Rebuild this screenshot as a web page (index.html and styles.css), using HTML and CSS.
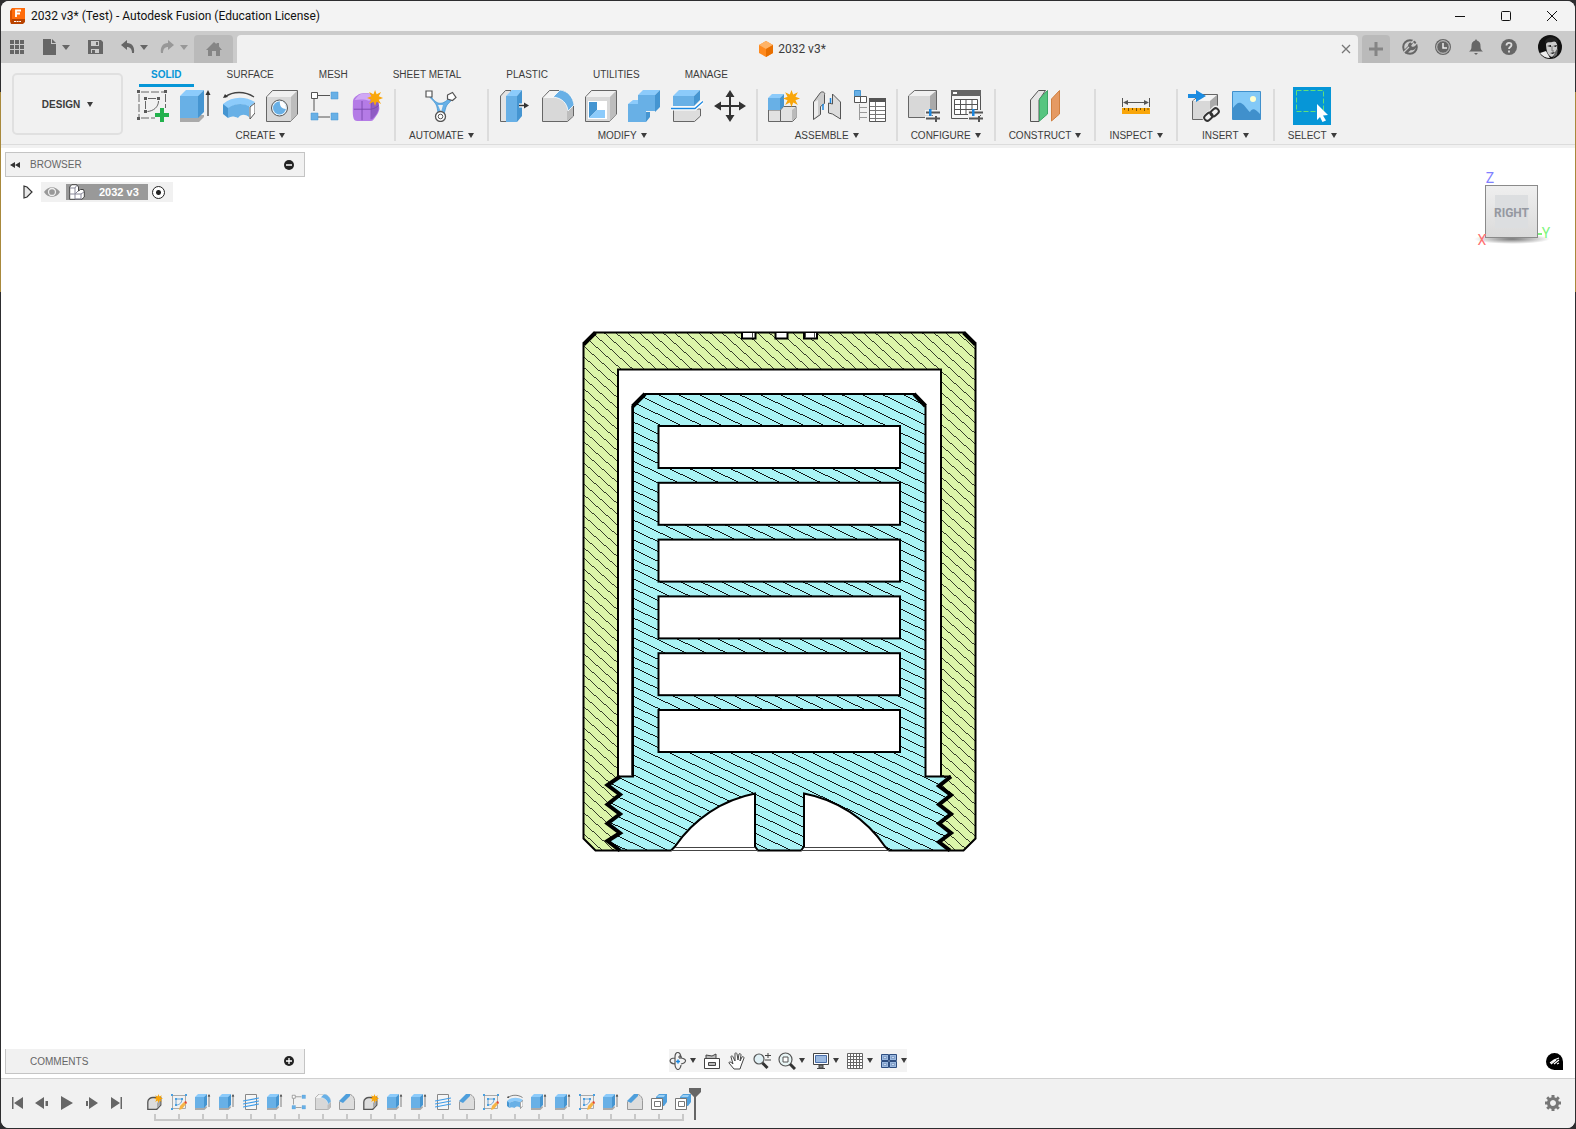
FILE: index.html
```html
<!DOCTYPE html>
<html lang="en">
<head>
    <meta charset="UTF-8">
    <meta name="viewport" content="width=device-width, initial-scale=1.0">
    <title>2032 v3* (Test) - Autodesk Fusion (Education License)</title>
    <link rel="stylesheet" href="styles.css">
</head>
<body>
    <!-- Icon definitions -->
    <svg class="defs" aria-hidden="true">
        <symbol id="i-sketch" viewBox="0 0 32 32">
            <path d="M2 4v24M4 28h14M4 2h24M28.500 4v14" fill="none" stroke="#666" stroke-dasharray="8 2"/>
            <path d="M0 0h3v3H0zM27 0h3v3h-3zM0 27h3v3H0zM7 7h3v3H7zM20 7h3v3h-3zM7 20h3v3H7z" fill="#5a5a5a"/>
            <path d="M11 8.500h8M8.500 11v8M21.500 11c0 6-5 10-11 10.500" fill="none" stroke="#666"/>
            <path d="M23 18h4v5h5v4h-5v5h-4v-5h-5v-4h5z" fill="#22b14c"/>
        </symbol>
        <symbol id="i-extrude" viewBox="0 0 32 32">
            <path d="M0 28l5-3h19v2l-5 5H0z" fill="#aaa"/>
            <path d="M0 6h18v22H0z" fill="#68b0e6"/>
            <path d="M0 6l6-6h18l-6 6z" fill="#8ccbfb"/>
            <path d="M18 6l6-6v22l-6 6z" fill="#4595d1"/>
            <path d="M28 26V4" stroke="#333" stroke-width="1.200"/><path d="M28 0l2.500 5h-5z" fill="#333"/>
        </symbol>
        <symbol id="i-revolve" viewBox="0 0 32 32">
            <path d="M2 7C10 1 22 1 31 7" fill="none" stroke="#444" stroke-width="1.300"/><path d="M0 8l2-4 3 3z" fill="#333"/>
            <path d="M0 14C9 6 22 6 32 12l-5 5c-6-4-15-4-23 2z" fill="#8ccbfb"/>
            <path d="M0 14l5 4v10l-5-4z" fill="#4595d1"/>
            <path d="M5 18c7-5 15-5 21-2v11c-4-3-8-3-11 1-4-2-7-2-10 0z" fill="#68b0e6"/>
            <path d="M27 17l5-4v10l-5 6z" fill="#fff" stroke="#555"/>
        </symbol>
        <symbol id="i-hole" viewBox="0 0 32 32">
            <path d="M.5 7l6-6.500h25V24l-7 7.500H.5z" fill="#d8d8d8" stroke="#666"/>
            <path d="M1 7l6-6h24l-6 6z" fill="#f0f0f0"/><path d="M25 7l6-6v23l-6 7z" fill="#bdbdbd"/>
            <circle cx="13.500" cy="18" r="8" fill="#e8f3fb" stroke="#555"/>
            <circle cx="13.500" cy="18" r="6.500" fill="#68b0e6"/>
            <path d="M14 11a7 7 0 0 1 6 8c-4 0-7-3-6-8z" fill="#fff"/>
        </symbol>
        <symbol id="i-pattern" viewBox="0 0 32 32">
            <path d="M9 5.500h12M5 9v12M9 27h12" stroke="#555"/>
            <path d="M2.500 2.500h6v6h-6z" fill="#fff" stroke="#555"/>
            <path d="M22 2h7v7h-7zM2 23h7v7H2zM22 23h7v7h-7z" fill="#68b0e6" stroke="#4595d1" stroke-width=".5"/>
        </symbol>
        <symbol id="i-star" viewBox="0 0 16 16">
            <path d="M8 0l1.600 4.300L14 2l-2.300 4.300L16 8l-4.300 1.700L14 14l-4.400-2.300L8 16l-1.600-4.300L2 14l2.300-4.300L0 8l4.300-1.700L2 2l4.400 2.300z" fill="#f9a60a"/>
        </symbol>
        <symbol id="i-form" viewBox="0 0 32 32">
            <path d="M1 12c0-5 2-6 6-9 2-2 13-2 16 0 4 3 7 10 7 15 0 4-4 10-7 13-2 2-17 2-20 0-3-3-2-12-2-19z" fill="#b47be6"/>
            <path d="M3 9c3-4 5-7 9-7 5 0 9 0 11 2l-4 6c-5-2-11-2-16-1z" fill="#d0a8f5"/>
            <path d="M21 12c3-4 6-3 8-1 1 8 0 12-7 19z" fill="#8f5cc4"/>
            <path d="M11 10v21M2 19h19c4-1 6-2 8-4M21 11v19" fill="none" stroke="#7a47ad"/>
        </symbol>
        <symbol id="i-formstar" viewBox="0 0 34 34">
            <use href="#i-form" x="0" y="2" width="31" height="31"/><use href="#i-star" x="16" y="0" width="17" height="17"/>
        </symbol>
        <symbol id="i-automate" viewBox="0 0 32 32">
            <path d="M5 5c3 5 6 7 8 8 4 1 8-1 11-5l3 2c-2 2-5 4-6 7-1 4-2 6-2 9h-6c0-5-1-11-3-13-2-3-4-4-6-7z" fill="#68b0e6" stroke="#3d8fce" stroke-width=".7"/>
            <path d="M13 15h5l-2 7z" fill="#f1f1f1"/>
            <path d="M1 1h6v6H1zM22.500 5l5-2.500 3.500 5-3.500 3-5-1.500z" fill="#fff" stroke="#555" stroke-width="1.200"/>
            <circle cx="15.500" cy="26.500" r="5" fill="#fff" stroke="#555" stroke-width="1.300"/>
            <circle cx="15.500" cy="26.500" r="2.300" fill="#fff" stroke="#555"/>
        </symbol>
        <symbol id="i-press" viewBox="0 0 32 32">
            <path d="M1.500 6l5-5.500H12v31H1.500z" fill="#e4e4e4" stroke="#666"/>
            <path d="M7 6h11v26H7z" fill="#68b0e6"/><path d="M7 6l6-6h10l-5 6z" fill="#8ccbfb"/><path d="M18 6l5-6v26l-5 6z" fill="#4595d1"/>
            <path d="M20 15.500h6" stroke="#fff" stroke-width="4"/><path d="M20 15.500h7" stroke="#333" stroke-width="1.500"/><path d="M25 12.500l5 3-5 3z" fill="#333"/>
        </symbol>
        <symbol id="i-fillet" viewBox="0 0 32 32">
            <path d="M.5 8l7-7.500H19C26 2 31 8 31.500 16v10l-6 5.500H.5z" fill="#d8d8d8" stroke="#666"/>
            <path d="M1 8l7-7h9l-6 7z" fill="#f4f4f4"/><path d="M25 20l6-5v11l-6 5z" fill="#bdbdbd"/>
            <path d="M11 7l7-7c8 1 13 7 14 15l-6 6c-1-8-6-13-15-14z" fill="#68b0e6" stroke="#fff" stroke-width=".8"/>
        </symbol>
        <symbol id="i-shell" viewBox="0 0 32 32">
            <path d="M.5 7l6-6.500h25V24l-7 7.500H.5z" fill="#d8d8d8" stroke="#666"/>
            <path d="M1 7l6-6h24l-6 6z" fill="#f0f0f0"/><path d="M25 7l6-6v23l-6 7z" fill="#bdbdbd"/>
            <path d="M3 11h19v18H3z" fill="#fff"/>
            <path d="M4 12h8v8l-8 8z" fill="#4595d1"/><path d="M12 20h8v8H4z" fill="#8ccbfb"/>
        </symbol>
        <symbol id="i-combine" viewBox="0 0 32 32">
            <path d="M10 5h17v16H10z" fill="#68b0e6"/><path d="M0 14h18v18H0z" fill="#68b0e6"/>
            <path d="M10 5l5-5h17l-5 5zM0 14l5-4h5v4z" fill="#8ccbfb"/>
            <path d="M27 5l5-5v17l-5 5zM18 22h4v5l-4 5z" fill="#4595d1"/>
        </symbol>
        <symbol id="i-split" viewBox="0 0 32 32">
            <path d="M2.500 19h27v7l-6 5.500h-21z" fill="#ddd" stroke="#666"/>
            <path d="M2 6h21v10H2z" fill="#68b0e6"/><path d="M2 6l6-6h21l-6 6z" fill="#8ccbfb"/><path d="M23 6l6-6v10l-6 6z" fill="#4595d1"/>
            <path d="M0 18.500h24l8-7" fill="none" stroke="#fff" stroke-width="4"/><path d="M0 18.500h24l8-7" fill="none" stroke="#1b87e0" stroke-width="1.300"/>
        </symbol>
        <symbol id="i-move" viewBox="0 0 32 32">
            <path d="M16 5v22M5 16h22" stroke="#333" stroke-width="2"/>
            <path d="M16 0l4.500 7h-9zM16 32l4.500-7h-9zM0 16l7-4.500v9zM32 16l-7-4.500v9z" fill="#333"/>
        </symbol>
        <symbol id="i-newcomp" viewBox="0 0 32 32">
            <path d="M.5 20h12v11.500H.5zM12.500 20l3-3.500H28V28l-3.500 3.500h-12z" fill="#e2e2e2" stroke="#666"/>
            <path d="M24 20l4-3v11l-4 3z" fill="#bbb"/>
            <path d="M0 8h12v12H0z" fill="#68b0e6"/><path d="M0 8l4-4h12l-4 4z" fill="#8ccbfb"/><path d="M12 8l4-4v12l-4 4z" fill="#4595d1"/>
            <use href="#i-star" x="15" y="0" width="17" height="17"/>
        </symbol>
        <symbol id="i-joint" viewBox="0 0 32 32">
            <path d="M2.500 12l7-9.500c2-1.500 5 0 4 2v9l-4 3v8l-7 5z" fill="#ccc" stroke="#555"/>
            <path d="M3 12l4-2v15l-4 3z" fill="#eee"/>
            <path d="M29.500 29V12l-8-8v10l-4-1v10l4 1z" fill="#ddd" stroke="#555"/>
            <path d="M12 14v6M19.500 8v5" stroke="#1b87e0" stroke-width="1.500"/>
        </symbol>
        <symbol id="i-table" viewBox="0 0 32 32">
            <path d="M.5.500h6v6h-6z" fill="#68b0e6" stroke="#4595d1"/><path d="M.5 6.500h6v6h-6zM6.500 6.500h6v6h-6z" fill="#fff" stroke="#555"/>
            <path d="M5.500 14v16M6 17.500h7M6 22.500h7M6 27.500h7" stroke="#999"/>
            <path d="M15.500 8.500h16v23h-16z" fill="#fff" stroke="#555"/><path d="M15 8h17v4H15z" fill="#555"/>
            <path d="M16 16.500h15M16 20.500h15M16 24.500h15M16 28.500h15M21.500 12v19" stroke="#777"/>
        </symbol>
        <symbol id="i-sliders" viewBox="0 0 16 14">
            <path d="M0 3.500h14M0 9.500h14" stroke="#f1f1f1" stroke-width="5"/>
            <path d="M1 3.500h14M1 9.500h14" stroke="#555" stroke-width="2"/>
            <path d="M4 0h2.500v7H4z" fill="#1b87e0"/><path d="M10 7h2v6h-2z" fill="#555"/>
        </symbol>
        <symbol id="i-config" viewBox="0 0 32 32">
            <path d="M.5 6l6-5.500h22V21l-6 6.500H.5z" fill="#d8d8d8" stroke="#666"/><path d="M1 6l6-5h21l-6 5z" fill="#f0f0f0"/><path d="M22 6l6-5v20l-6 6z" fill="#aaa"/>
            <use href="#i-sliders" x="17" y="19" width="16" height="14"/>
        </symbol>
        <symbol id="i-configtable" viewBox="0 0 32 32">
            <path d="M.5.500h29v28H.5z" fill="#f6f6f6" stroke="#555"/><path d="M0 0h30v6H0z" fill="#666"/><path d="M2 2h4v2H2z" fill="#fff"/>
            <path d="M3.500 9.500h23v15h-23zM3.500 14.500h23M3.500 19.500h23M9.500 9.500v15M15 9.500v15M21 9.500v15" fill="#fff" stroke="#555"/>
            <use href="#i-sliders" x="17" y="19" width="16" height="14"/>
        </symbol>
        <symbol id="i-plane" viewBox="0 0 32 32">
            <path d="M1.500 10l8-9.500h7L10 10v21.500H1.500z" fill="#e6e6e6" stroke="#555"/>
            <path d="M10.500 9l8-8.500V24l-8 7z" fill="#56c580" stroke="#3da566"/>
            <path d="M22.500 9l8-8.500V24l-8 7z" fill="#e59a63" stroke="#d08040"/>
        </symbol>
        <symbol id="i-measure" viewBox="0 0 32 32">
            <path d="M2.500 8v9M29.500 8v9M5 12.500h22" stroke="#555"/><path d="M3 12.500l5-2.500v5zM29 12.500l-5-2.500v5z" fill="#555"/>
            <path d="M2 18h28v6H2z" fill="#f9a60a"/><path d="M4.500 18v2M8.500 18v3M12.500 18v2M16.500 18v3M20.500 18v2M24.500 18v3M28 18v2" stroke="#7a5200"/>
        </symbol>
        <symbol id="i-insert" viewBox="0 0 32 32">
            <path d="M4.500 11l8-6.500h17V22l-8 7.500h-17z" fill="#d8d8d8" stroke="#666"/><path d="M5 11l8-6h16l-7 6z" fill="#f4f4f4"/><path d="M22 11l7-6v17l-7 7z" fill="#aaa"/>
            <path d="M0 4h8V0l10 6-10 6V8H0z" fill="#1b8be0"/>
            <path d="M19 28l3-3M25 23l3-3" stroke="#f1f1f1" stroke-width="9" stroke-linecap="round"/>
            <g fill="none" stroke="#333" stroke-width="2"><rect x="16" y="24" width="9" height="6" rx="3" transform="rotate(-42 20 27)"/><rect x="22" y="19" width="9" height="6" rx="3" transform="rotate(-42 27 22)"/></g>
        </symbol>
        <symbol id="i-image" viewBox="0 0 32 32">
            <path d="M1.500 1.500h28v28h-28z" fill="#83c9f7" stroke="#4090cc"/><path d="M2 18c3-4 5-6 8-5 4 2 7 8 9 9 2-4 5-4 10 2v6H2z" fill="#4090cc"/><circle cx="22" cy="9" r="3" fill="#ffffd0"/>
        </symbol>
        <symbol id="i-select" viewBox="0 0 38 38">
            <path d="M3.500 3.500h27v21h-27z" fill="none" stroke="#5fe07a" stroke-dasharray="5 2"/>
            <path d="M24 17l11 11-5 .5 3 5-3.500 1.500-2.500-5-3 3z" fill="#fff"/>
        </symbol>
        <!-- Timeline only -->
        <symbol id="t-comp" viewBox="0 0 16 16">
            <path d="M.8 8c0-3 3-4.500 5-4.500h8V11l-4 4.300h-9z" fill="#ddd" stroke="#555" stroke-width="1.300"/><path d="M10 9l3.300-3v5L10 14.600z" fill="#aaa"/><use href="#i-star" x="7" y="0" width="9" height="9"/>
        </symbol>
        <symbol id="t-sketch" viewBox="0 0 16 16">
            <path d="M1.500 1.500h13v13h-13z" fill="none" stroke="#aaa"/><path d="M5 5h6c0 3-2 6-6 6z" fill="none" stroke="#68a0d0"/>
            <path d="M0 0h2v2H0zM14 0h2v2h-2zM0 14h2v2H0zM4 4h2v2H4zM10 4h2v2h-2zM4 10h2v2H4z" fill="#4ba0e0"/><path d="M9 12l4-4 2 2-4 5-3 1z" fill="#f5b445"/><path d="M13 8l2-1 1 2-1 1z" fill="#e5442c"/>
        </symbol>
        <symbol id="t-coil" viewBox="0 0 16 16">
            <path d="M2.500.500h11v15h-11z" fill="#f6f6f6" stroke="#888"/><path d="M0 7l16-3M0 10l16-3M0 13l16-3" stroke="#3d9be8" stroke-width="1.200"/>
        </symbol>
        <symbol id="t-chamfer" viewBox="0 0 16 16">
            <path d="M.5 8l7-7.500h4c2 1 4 3 4 6v9H.5z" fill="#ddd" stroke="#999"/><path d="M0 7l7-7h4v2l-7 7z" fill="#4f9fdc"/>
        </symbol>
        <symbol id="t-combine" viewBox="0 0 16 16">
            <path d="M5 3l3-3h8v8l-3 4H5z" fill="#4f9fdc"/><path d="M6 3l2-2h6l-1 2z" fill="#9bd0f5"/><path d="M.5 4.500h11v11H.5z" fill="#fff" stroke="#777"/><path d="M3.500 7.500h6v5h-6z" fill="#fff" stroke="#777"/>
        </symbol>
    </svg>

    <div class="window">
        <header class="titlebar">
            <svg class="app-logo" viewBox="0 0 15 17"><path d="M1 3l2-2h12v13l-2 2H1z" fill="#b84300"/><path d="M2 0h13v11H2z" fill="#ff6b0a"/><path d="M0 3l2-3v11l-2 5z" fill="#d95200"/><path d="M6 9V2.500h5M6 5.500h4" fill="none" stroke="#fff" stroke-width="1.800"/><path d="M4 13.500h7" stroke="#fff" stroke-dasharray="2 .6"/></svg>
            <h1 class="window-title">2032 v3* (Test) - Autodesk Fusion (Education License)</h1>
            <div class="window-controls">
                <button type="button" aria-label="Minimize"><svg viewBox="0 0 10 10"><path d="M0 5.500h10"/></svg></button>
                <button type="button" aria-label="Maximize"><svg viewBox="0 0 10 10"><rect x=".5" y=".5" width="9" height="9" rx="1"/></svg></button>
                <button type="button" aria-label="Close"><svg viewBox="0 0 10 10"><path d="M0 0l10 10M10 0L0 10"/></svg></button>
            </div>
        </header>

        <nav class="quickbar">
            <div class="quick-tools">
                <button type="button" aria-label="Data panel"><svg viewBox="0 0 16 16"><path d="M1 1h4v4H1zM6 1h4v4H6zM11 1h4v4h-4zM1 6h4v4H1zM6 6h4v4H6zM11 6h4v4h-4zM1 11h4v4H1zM6 11h4v4H6zM11 11h4v4h-4z"/></svg></button>
                <button type="button" aria-label="File"><svg viewBox="0 0 16 16"><path d="M1 0h8v5h5v11H1z"/><path d="M10 0l4 4h-4z"/></svg><i class="caret big"></i></button>
                <button type="button" aria-label="Save"><svg viewBox="0 0 16 16"><path fill-rule="evenodd" d="M1 1h13l2 2v12H1zM4 2v5h8V2zM4 10v4h8v-4z"/><path d="M9 3h2v3H9zM5 11h3v3H5z"/></svg></button>
                <div class="history">
                    <button type="button" aria-label="Undo"><svg viewBox="0 0 16 16"><path d="M1 6l6-5v3c5 0 8 4 7 10h-2c0-4-2-6-5-6v3z"/></svg><i class="caret big"></i></button>
                    <button type="button" class="muted" aria-label="Redo"><svg viewBox="0 0 16 16"><path d="M14 6L8 1v3C3 4 0 8 1 14h2c0-4 2-6 5-6v3z"/></svg><i class="caret big"></i></button>
                </div>
            </div>
            <button type="button" class="home-tab" aria-label="Home"><svg viewBox="0 0 16 16"><path d="M8 1l2.500 2.300V2H13v3.600L16 9h-2v6h-4v-5H6v5H2V9H0z"/></svg></button>
            <div class="doc-tab">
                <span class="doc-name"><svg viewBox="0 0 16 16"><path d="M8 0l7 4v8l-7 4-7-4V4z" fill="#ff8a1e"/><path d="M8 0l7 4-7 4-7-4z" fill="#ffb366"/><path d="M8 8l7-4v8l-7 4z" fill="#e86f00"/></svg>2032 v3*</span>
                <button type="button" class="doc-close" aria-label="Close tab"><svg viewBox="0 0 10 10"><path d="M1 1l8 8M9 1L1 9"/></svg></button>
            </div>
            <button type="button" class="new-tab" aria-label="New tab"><svg viewBox="0 0 14 14"><path d="M5.500 0h3v5.500H14v3H8.500V14h-3V8.500H0v-3h5.500z"/></svg></button>
            <div class="account">
                <button type="button" aria-label="Extensions"><svg viewBox="0 0 16 16"><circle cx="8" cy="8" r="6.800" fill="none" stroke="#666" stroke-width="2"/><path d="M1 12l5-5c0-3 3-5 5-3l-2 3 2 1 3-2c1 3-2 6-5 5l-5 4z"/><path d="M1 14l6-6M9 4l3-3M12 7l3-3" fill="none" stroke="#cbcbcb" stroke-width="1.300"/></svg></button>
                <button type="button" aria-label="Job status"><svg viewBox="0 0 16 16"><circle cx="8" cy="8" r="8"/><circle cx="8" cy="8" r="6.300" fill="none" stroke="#cbcbcb"/><path d="M8 4v5h4" fill="none" stroke="#eee" stroke-width="1.500"/></svg></button>
                <button type="button" aria-label="Notifications"><svg viewBox="0 0 16 16"><path d="M8 0l1 1.500c3 1 3.500 3 3.500 5.500 0 3 .5 4 2.500 5.500H1C3 11 3.500 10 3.500 7c0-2.500.5-4.500 3.500-5.500zM6 14h4l-2 2z"/></svg></button>
                <button type="button" aria-label="Help"><svg viewBox="0 0 16 16"><circle cx="8" cy="8" r="8"/><path d="M5.500 6.500C5.500 3 10.500 3 10.500 6c0 2-2.500 2-2.500 4M8 11.500v2" fill="none" stroke="#ddd" stroke-width="1.800"/></svg></button>
                <button type="button" class="avatar" aria-label="Profile"><svg viewBox="0 0 24 24"><circle cx="12" cy="12" r="12" fill="#111"/><path d="M8 8c2-4 10-4 11 1 1 5-1 10-5 13-4-1-6-6-6-14z" fill="#ccc"/><path d="M8 9c2-3 4-1 6-2s4-1 5 2l1-3c-3-6-12-4-13 1z" fill="#222"/><path d="M9 11l4-1v2zM15 11l4-1-1 2zM12 18l5-1-2 2z" fill="#111"/><path d="M14 11v5h2" fill="none" stroke="#777"/><path d="M2 18l6-2 4 7c-4 0-8-2-10-5z" fill="#eee"/><path d="M17 17l3-4-1 7-4 3z" fill="#666"/></svg></button>
            </div>
        </nav>

        <div class="ribbon">
            <button type="button" class="workspace">DESIGN<i class="caret"></i></button>
            <div class="ribbon-main">
                <div class="tabs" role="tablist">
                    <button type="button" role="tab" class="active" aria-selected="true">SOLID</button>
                    <button type="button" role="tab">SURFACE</button>
                    <button type="button" role="tab">MESH</button>
                    <button type="button" role="tab">SHEET METAL</button>
                    <button type="button" role="tab">PLASTIC</button>
                    <button type="button" role="tab">UTILITIES</button>
                    <button type="button" role="tab">MANAGE</button>
                </div>
                <div class="groups">
                    <section class="group">
                        <div class="tools">
                            <button type="button" aria-label="Create sketch"><svg><use href="#i-sketch"/></svg></button>
                            <button type="button" aria-label="Extrude"><svg><use href="#i-extrude"/></svg></button>
                            <button type="button" aria-label="Revolve"><svg><use href="#i-revolve"/></svg></button>
                            <button type="button" aria-label="Hole"><svg><use href="#i-hole"/></svg></button>
                            <button type="button" aria-label="Pattern"><svg><use href="#i-pattern"/></svg></button>
                            <button type="button" aria-label="Create form"><svg><use href="#i-formstar"/></svg></button>
                        </div>
                        <button type="button" class="group-label">CREATE<i class="caret"></i></button>
                    </section>
                    <section class="group">
                        <div class="tools">
                            <button type="button" aria-label="Automated modeling"><svg><use href="#i-automate"/></svg></button>
                        </div>
                        <button type="button" class="group-label">AUTOMATE<i class="caret"></i></button>
                    </section>
                    <section class="group">
                        <div class="tools">
                            <button type="button" aria-label="Press pull"><svg><use href="#i-press"/></svg></button>
                            <button type="button" aria-label="Fillet"><svg><use href="#i-fillet"/></svg></button>
                            <button type="button" aria-label="Shell"><svg><use href="#i-shell"/></svg></button>
                            <button type="button" aria-label="Combine"><svg><use href="#i-combine"/></svg></button>
                            <button type="button" aria-label="Split body"><svg><use href="#i-split"/></svg></button>
                            <button type="button" aria-label="Move"><svg><use href="#i-move"/></svg></button>
                        </div>
                        <button type="button" class="group-label">MODIFY<i class="caret"></i></button>
                    </section>
                    <section class="group">
                        <div class="tools">
                            <button type="button" aria-label="New component"><svg><use href="#i-newcomp"/></svg></button>
                            <button type="button" aria-label="Joint"><svg><use href="#i-joint"/></svg></button>
                            <button type="button" aria-label="Bill of materials"><svg><use href="#i-table"/></svg></button>
                        </div>
                        <button type="button" class="group-label">ASSEMBLE<i class="caret"></i></button>
                    </section>
                    <section class="group">
                        <div class="tools">
                            <button type="button" aria-label="Configure"><svg><use href="#i-config"/></svg></button>
                            <button type="button" aria-label="Configuration table"><svg><use href="#i-configtable"/></svg></button>
                        </div>
                        <button type="button" class="group-label">CONFIGURE<i class="caret"></i></button>
                    </section>
                    <section class="group">
                        <div class="tools">
                            <button type="button" aria-label="Offset plane"><svg><use href="#i-plane"/></svg></button>
                        </div>
                        <button type="button" class="group-label">CONSTRUCT<i class="caret"></i></button>
                    </section>
                    <section class="group">
                        <div class="tools">
                            <button type="button" aria-label="Measure"><svg><use href="#i-measure"/></svg></button>
                        </div>
                        <button type="button" class="group-label">INSPECT<i class="caret"></i></button>
                    </section>
                    <section class="group">
                        <div class="tools">
                            <button type="button" aria-label="Insert derive"><svg><use href="#i-insert"/></svg></button>
                            <button type="button" aria-label="Canvas"><svg><use href="#i-image"/></svg></button>
                        </div>
                        <button type="button" class="group-label">INSERT<i class="caret"></i></button>
                    </section>
                    <section class="group">
                        <div class="tools">
                            <button type="button" class="selected" aria-label="Select"><svg><use href="#i-select"/></svg></button>
                        </div>
                        <button type="button" class="group-label">SELECT<i class="caret"></i></button>
                    </section>
                </div>
            </div>
        </div>

        <main class="canvas">
            <!-- Section view of the model -->
            <svg class="model" viewBox="1 148 1574 930" role="img" aria-label="Section analysis">
                <defs>
                    <clipPath id="cap-clip"><path d="M595.500 332.500H963.500L975.500 344.500V838.500L963.500 850.500H950L939 842 951 833 939 823.500 951 814 939 804.500 951 795 939 786 951 776.500H941V369.500H618V776.500H620L607.500 785 620 794.500 607.500 804.500 620 814 607.500 823.500 620 833 607.500 841 620 850.500H595.500L583.500 838.500V344.500z"/></clipPath>
                    <clipPath id="core-clip"><path d="M645 394H914L925.500 406V776.500H951L939 786 951 795 939 804.500 951 814 939 823.500 951 833 939 842 950 850.500H889L885 846.500A126 126 0 0 0 804 793.500V846.500L801 850.500H758L755 846.500V793.500A126 126 0 0 0 675 846.500L671 850.500H620L607.500 841 620 833 607.500 823.500 620 814 607.500 804.500 620 794.500 607.500 785 620 776.500H633V406z"/></clipPath>
                </defs>
                <g clip-path="url(#cap-clip)">
                    <rect x="580" y="330" width="400" height="524" fill="#dcf5aa"/>
                    <path id="cap-hatch" class="hatch" stroke-width=".75"/>
                </g>
                <g clip-path="url(#core-clip)">
                    <rect x="600" y="390" width="360" height="464" fill="#aaf3f5"/>
                    <path id="core-hatch" class="hatch" stroke-width=".9"/>
                </g>
                <g class="edges">
                    <path d="M620 850.500H595.500L583.500 838.500V344.500L595.500 332.500H963.500L975.500 344.500V838.500L963.500 850.500H950"/>
                    <path d="M618 776.500V369.500H941V776.500"/>
                    <path d="M618 776.500H633V406L645 394H914L925.500 406V776.500H951"/>
                    <path d="M620 850.500H671L675 846.500A126 126 0 0 1 755 793.500V846.500L758 850.500H801L804 846.500V793.500A126 126 0 0 1 885 846.500L889 850.500H950"/>
                    <path class="heavy" d="M583.500 344.500L595.500 332.500M963.500 332.500L975.500 344.500M632.500 406.500L645 394M914 394L925.500 406"/>
                    <path class="heavy" d="M620 776.500L607.500 785 620 794.500 607.500 804.500 620 814 607.500 823.500 620 833 607.500 841 620 850.500M951 776.500L939 786 951 795 939 804.500 951 814 939 823.500 951 833 939 842 950 850.500"/>
                    <path class="thin" d="M631.500 406V776M675 847.500H755M671 850.500H758M804 847.500H885M801 850.500H889"/>
                </g>
                <g id="slots" class="slots"></g>
                <g class="notches">
                    <path d="M742 333v5.500h13.500V333M775.500 333v5.500h12V333M804 333v5.500h13V333"/>
                    <path class="thin" d="M752.500 333v5M805.500 333v5M814.500 333v5"/>
                </g>
            </svg>

            <!-- View cube -->
            <svg class="viewcube" viewBox="0 0 84 84" role="img" aria-label="View cube">
                <defs>
                    <linearGradient id="cube-face" x2="0" y2="1"><stop offset="0" stop-color="#efefef"/><stop offset="1" stop-color="#dadada"/></linearGradient>
                    <radialGradient id="cube-shadow"><stop offset="0" stop-color="#777"/><stop offset="1" stop-color="#777" stop-opacity="0"/></radialGradient>
                </defs>
                <ellipse cx="42" cy="71" rx="38" ry="5" fill="url(#cube-shadow)"/>
                <rect x="15.500" y="17.500" width="52" height="52" fill="url(#cube-face)" stroke="#8a8a8a"/>
                <rect x="25" y="27" width="33" height="33" fill="#dcdee0"/>
                <path d="M68 66h4" stroke="#7df57d" stroke-width="2"/>
                <text class="cube-text" x="41.500" y="49">RIGHT</text>
                <text class="axis axis-z" x="20" y="15">Z</text>
                <text class="axis axis-x" x="12" y="77">X</text>
                <text class="axis axis-y" x="76" y="70">Y</text>
            </svg>

            <aside class="browser">
                <div class="panel-bar">
                    <button type="button" class="collapse" aria-label="Collapse"><svg viewBox="0 0 10 6"><path d="M5 0v6L0 3zM10 0v6L5 3z"/></svg></button>
                    <h2>BROWSER</h2>
                    <button type="button" class="dot" aria-label="Hide"><svg viewBox="0 0 10 10"><circle cx="5" cy="5" r="5"/><path d="M2 5h6" stroke="#fff" stroke-width="1.500"/></svg></button>
                </div>
                <div class="tree-row">
                    <button type="button" class="expander" aria-label="Expand"><svg viewBox="0 0 10 14"><path d="M1 1v12l3-1 5-5-5-5z" fill="#e8e8e8" stroke="#333" stroke-width="1.200"/></svg></button>
                    <div class="tree-item">
                        <button type="button" class="eye" aria-label="Visibility"><svg viewBox="0 0 16 12"><path d="M0 6C4-.5 12-.5 16 6 12 12.500 4 12.500 0 6z" fill="#999"/><circle cx="8" cy="6" r="3.500" fill="#999" stroke="#eee" stroke-width="1.300"/></svg></button>
                        <span class="tree-name"><svg viewBox="0 0 16 16"><path d="M.7 3l2-2.300h5L9.500 3v4l2-1.500h3L15.300 8v5l-2.500 2.300H.7z" fill="#fff" stroke="#444"/><path d="M6 10h6v5H6zM6 10l3-3M12 10l3-2M6 4v6M.7 10H6M1 4h5l2-3" fill="none" stroke="#889"/></svg><b>2032 v3</b></span>
                        <input type="radio" name="active-component" aria-label="Activate component" checked>
                    </div>
                </div>
            </aside>

            <div class="canvas-foot">
                <div class="panel-bar comments">
                    <h2>COMMENTS</h2>
                    <button type="button" class="dot" aria-label="Show comments"><svg viewBox="0 0 10 10"><circle cx="5" cy="5" r="5"/><path d="M2 5h6M5 2v6" stroke="#fff" stroke-width="1.300"/></svg></button>
                </div>
                <div class="navbar">
                    <button type="button" aria-label="Orbit"><svg viewBox="0 0 18 18"><path d="M6 12C-1 11 0 6 6 6M12 6c7 1 5 5 0 6M6 5c0-6 5-6 6 0M6 13c1 6 5 6 6 0M6 5v8M11 3v4M9 5h4" fill="none" stroke="#555" stroke-width="1.200"/><path d="M9 7.500v4M7 9.500h4" stroke="#1b87e0" stroke-width="1.500"/></svg><i class="caret"></i></button>
                    <button type="button" aria-label="Look at"><svg viewBox="0 0 18 18"><path d="M1.500 6.500h15v10h-15z" fill="#fff" stroke="#444"/><path d="M3 6V3l6 1 4-2v4M5.500 10.500h7v3h-7z" fill="#bbb" stroke="#444"/></svg></button>
                    <button type="button" aria-label="Pan"><svg viewBox="0 0 18 18"><path d="M6 17l-5-6c0-2 2-1 4 1L3 5c0-2 2-1 2 0l2 4V2c0-2 2-1 2 0l1 6 1-6c1-1 2 0 2 1l-1 6 2-4c1-1 2 0 2 1l-3 8-1 3z" fill="#fff" stroke="#444"/></svg></button>
                    <button type="button" aria-label="Zoom"><svg viewBox="0 0 18 18"><circle cx="6" cy="7" r="5" fill="#e0f0f5" stroke="#555" stroke-width="1.200"/><path d="M9.500 11l5 5" stroke="#333" stroke-width="3"/><path d="M12 3.500h6M15 1v5M12 8h6" stroke="#444"/></svg></button>
                    <button type="button" aria-label="Fit"><svg viewBox="0 0 18 18"><circle cx="7.500" cy="7.500" r="6.500" fill="#e8f5f5" stroke="#555" stroke-width="1.200"/><path d="M5 5h5v5H5z" fill="#fff" stroke="#555"/><path d="M12 12l5 5" stroke="#333" stroke-width="3"/></svg><i class="caret"></i></button>
                    <button type="button" aria-label="Display settings"><svg viewBox="0 0 18 18"><path d="M1.500 1.500h15v11h-15z" fill="#fff" stroke="#444"/><path d="M3.500 3.500h11v7h-11z" fill="#9bb9e0" stroke="#4a6ea8"/><path d="M5 16.500h8M7 13h4v3H7z" fill="#888" stroke="#444"/></svg><i class="caret"></i></button>
                    <button type="button" aria-label="Grid and snaps"><svg viewBox="0 0 18 18"><path d="M1.500 1.500h15v15h-15zM4.500 1v16M7.500 1v16M10.500 1v16M13.500 1v16M1 4.500h16M1 7.500h16M1 10.500h16M1 13.500h16" fill="#fff" stroke="#666"/></svg><i class="caret"></i></button>
                    <button type="button" aria-label="Viewports"><svg viewBox="0 0 18 18"><path d="M1.500 2.500h7v6h-7zM9.500 2.500h7v6h-7zM1.500 9.500h7v6h-7zM9.500 9.500h7v6h-7z" fill="#9bb9e0" stroke="#2f4e80"/><path d="M3.500 4.500h3v2h-3zM11.500 4.500h3v2h-3zM3.500 11.500h3v2h-3zM11.500 11.500h3v2h-3z" fill="#c5d8f0" stroke="#5878a8" stroke-width=".5"/></svg><i class="caret"></i></button>
                </div>
                <button type="button" class="assistant" aria-label="Assistant"><svg viewBox="0 0 17 17"><path d="M8.500 0a8.500 8.500 0 0 1 8.500 8.500V17H8.500a8.500 8.500 0 0 1 0-17z"/><path d="M4 10l4-3 5-2M5 11l5-4M8 11l5-4M11 11l2-1" fill="none" stroke="#fff" stroke-width="1.200"/></svg></button>
            </div>
        </main>

        <footer class="timeline">
            <div class="playback">
                <button type="button" aria-label="Start"><svg viewBox="0 0 12 12"><path d="M1 0h1.500v12H1zM12 0v12L3 6z"/></svg></button>
                <button type="button" aria-label="Step back"><svg viewBox="0 0 14 12"><path d="M9 0v12L0 6zM10.500 4H13v5h-2.500z"/></svg></button>
                <button type="button" aria-label="Play"><svg viewBox="0 0 12 14"><path d="M0 0v14l12-7z"/></svg></button>
                <button type="button" aria-label="Step forward"><svg viewBox="0 0 14 12"><path d="M4 0v12l9-6zM1 4h2v5H1z"/></svg></button>
                <button type="button" aria-label="End"><svg viewBox="0 0 12 12"><path d="M9.500 0H11v12H9.500zM0 0v12l9-6z"/></svg></button>
            </div>
            <ol class="features" id="features"></ol>
            <svg class="marker" viewBox="0 0 12 32"><path d="M0 0h12v4L7 9v23H5V9L0 4z"/></svg>
            <button type="button" class="settings" aria-label="Timeline settings"><svg viewBox="0 0 16 16"><path fill-rule="evenodd" d="M6.500 0h3v2.200l1.700.7 1.600-1.600 2 2-1.600 1.600.7 1.600H16v3h-2.100l-.7 1.700 1.600 1.600-2 2-1.600-1.600-1.700.7V16h-3v-2.100l-1.700-.7-1.600 1.600-2-2 1.600-1.600-.7-1.700H0v-3h2.100l.7-1.600-1.600-1.600 2-2 1.600 1.600 1.700-.7zM8 5a3 3 0 1 0 .01 0z"/></svg></button>
        </footer>
    </div>

    <script>
        // Hatch lines: parallel strokes of one slope, clipped by the section shapes
        function hatch(id, slope, step, start, end, x1, x2) {
            let d = '';
            for (let y = start; y < end; y += step) {
                d += `M${x1} ${y}L${x2} ${y + (x2 - x1) * slope}`;
            }
            document.getElementById(id).setAttribute('d', d);
        }

        hatch('cap-hatch', 0.9, 10.6, -60, 860, 580, 980);
        hatch('core-hatch', 0.48, 9.8, 210, 860, 600, 960);

        // Battery slots
        const slots = document.getElementById('slots');
        for (let i = 0; i < 6; i++) {
            slots.innerHTML += `<rect x="658.5" y="${426 + i * 56.8}" width="241.5" height="42"/>`;
        }

        // Timeline features in build order
        const features = [
            't-comp', 't-sketch', 'i-extrude', 'i-extrude', 't-coil', 'i-extrude', 'i-pattern', 'i-fillet',
            't-chamfer', 't-comp', 'i-extrude', 'i-extrude', 't-coil', 't-chamfer', 't-sketch', 'i-revolve',
            'i-extrude', 'i-extrude', 't-sketch', 'i-extrude', 't-chamfer', 't-combine', 't-combine'
        ];
        document.getElementById('features').innerHTML = features.map(name =>
            `<li><button type="button" aria-label="${name.slice(2)}"><svg><use href="#${name}"/></svg></button></li>`
        ).join('');
    </script>
</body>
</html>
```
FILE: styles.css
```css
:root {
    --panel: #f1f1f1;
    --bar: #cbcbcb;
    --tab: #bababa;
    --line: #dcdcdc;
    --text: #3c3c3c;
    --icon: #666;
    --accent: #0696d7;
}

* {
    margin: 0;
    padding: 0;
    box-sizing: border-box;
}

body {
    height: 100vh;
    padding: 1px;
    background: linear-gradient(#2d2d2f 92px, #a8893c 92px, #a8893c 292px, #2d2d2f 292px);
    color: var(--text);
    font-family: 'Liberation Sans', Arial, sans-serif;
    font-size: 10px;
    overflow: hidden;
}

button {
    display: flex;
    align-items: center;
    justify-content: center;
    border: none;
    background: none;
    color: inherit;
    font: inherit;
    cursor: pointer;
}

svg {
    display: block;
    flex: none;
}

.defs {
    display: none;
}

.caret {
    width: 0;
    border: 3px solid transparent;
    border-top: 5px solid currentColor;
    border-bottom: 0;
    margin-left: 4px;
}

.caret.big {
    border-width: 5px 4px 0;
}

.window {
    display: flex;
    flex-direction: column;
    height: 100%;
    background: white;
    border-radius: 8px;
    overflow: hidden;
}

/* Title bar */
.titlebar {
    display: flex;
    align-items: center;
    height: 30px;
    padding-left: 9px;
    background: #f3f3f3;
    color: #111;
}

.app-logo {
    width: 15px;
    height: 17px;
}

.window-title {
    flex: 1;
    margin-left: 6px;
    font: 12px Roboto, sans-serif;
}

.window-controls {
    display: flex;
}

.window-controls button {
    width: 46px;
    height: 28px;
}

.window-controls svg {
    width: 10px;
    height: 10px;
    fill: none;
    stroke: #111;
}

/* Quick access bar and document tabs */
.quickbar {
    display: flex;
    align-items: flex-end;
    height: 32px;
    background: var(--bar);
    color: var(--icon);
    fill: var(--icon);
}

.quick-tools {
    display: flex;
    align-items: center;
    gap: 17px;
    height: 32px;
    padding: 0 6px 0 8px;
}

.quick-tools svg {
    width: 16px;
    height: 16px;
}

.history {
    display: flex;
    gap: 12px;
}

.muted {
    opacity: 0.5;
}

.home-tab {
    width: 39px;
    height: 28px;
    border-radius: 4px 4px 0 0;
    background: var(--tab);
    fill: #858585;
}

.home-tab svg {
    width: 16px;
    height: 16px;
}

.doc-tab {
    display: flex;
    flex: 1;
    align-items: center;
    height: 28px;
    margin: 0 4px;
    border-radius: 4px 4px 0 0;
    background: var(--panel);
}

.doc-name {
    display: flex;
    flex: 1;
    align-items: center;
    justify-content: center;
    gap: 4px;
    padding-left: 13px;
    font: 12px Roboto, sans-serif;
    color: var(--text);
}

.doc-name svg {
    width: 16px;
    height: 16px;
}

.doc-close {
    width: 24px;
    height: 24px;
}

.doc-close svg {
    width: 10px;
    height: 10px;
    stroke: #777;
    stroke-width: 1.3;
}

.new-tab {
    width: 28px;
    height: 28px;
    border-radius: 4px 4px 0 0;
    background: var(--tab);
    fill: #858585;
}

.new-tab svg {
    width: 14px;
    height: 14px;
}

.account {
    display: flex;
    align-items: center;
    gap: 9px;
    height: 32px;
    padding: 0 13px 0 8px;
}

.account button {
    width: 24px;
    height: 24px;
}

.account svg {
    width: 16px;
    height: 16px;
}

.account .avatar {
    margin-left: 8px;
}

.avatar svg {
    width: 24px;
    height: 24px;
}

/* Ribbon */
.ribbon {
    display: flex;
    height: 85px;
    padding-left: 11px;
    background: var(--panel);
    border-bottom: 3px solid var(--panel);
    box-shadow: inset 0 -1px var(--line);
}

.workspace {
    width: 111px;
    height: 62px;
    margin: 10px 4px 0 0;
    border: 2px solid #e0e0e0;
    border-radius: 5px;
    font-weight: bold;
}

.workspace .caret {
    margin-left: 7px;
}

.tabs {
    display: flex;
    gap: 21px;
    height: 24px;
    padding-left: 12px;
}

.tabs button {
    padding: 1px 12px 0;
    border-bottom: 3px solid transparent;
}

.tabs .active {
    border-color: var(--accent);
    color: var(--accent);
    font-weight: bold;
}

.groups {
    display: flex;
    padding-top: 2px;
}

.group {
    height: 52px;
    padding: 0 10px;
    border-right: 2px solid var(--line);
}

.group:last-child {
    border: none;
}

.tools {
    display: flex;
    align-items: center;
    justify-content: center;
    gap: 11px;
    height: 34px;
}

.tools svg {
    width: 32px;
    height: 32px;
}

.tools .selected {
    margin: -2px 0;
    background: var(--accent);
}

.tools .selected svg {
    width: 38px;
    height: 38px;
}

.group-label {
    height: 24px;
    margin: 0 auto;
    padding: 0 3px;
}

/* Canvas */
.canvas {
    position: relative;
    display: flex;
    flex: 1;
    flex-direction: column;
    justify-content: space-between;
    min-height: 0;
    background: white;
}

.model {
    position: absolute;
    inset: 0;
    width: 100%;
    height: 100%;
}

.hatch {
    fill: none;
    stroke: black;
    shape-rendering: crispEdges;
}

.edges path {
    fill: none;
    stroke: black;
    stroke-width: 2;
}

.edges .heavy {
    stroke-width: 4;
}

.edges .thin,
.notches .thin {
    stroke: #444;
    stroke-width: 1;
}

.slots rect,
.notches path {
    fill: white;
    stroke: black;
    stroke-width: 2;
}

.viewcube {
    position: absolute;
    top: 20px;
    right: 21px;
    width: 84px;
    height: 84px;
    font-family: Roboto, sans-serif;
}

.cube-text {
    fill: #9598a0;
    font-size: 12px;
    font-weight: bold;
    text-anchor: middle;
}

.axis {
    font-size: 14px;
    text-anchor: middle;
}

.axis-x {
    fill: #ff7070;
}

.axis-y {
    fill: #7df57d;
}

.axis-z {
    fill: #8080ff;
}

.browser {
    position: relative;
    width: 300px;
    margin: 4px 0 0 4px;
}

.panel-bar {
    display: flex;
    align-items: center;
    width: 300px;
    height: 25px;
    padding: 0 10px 0 4px;
    border: 1px solid #c4c4c4;
    background: var(--panel);
    color: #666;
}

.panel-bar h2 {
    flex: 1;
    margin-left: 10px;
    font-size: 10px;
    font-weight: normal;
}

.collapse svg {
    width: 10px;
    height: 6px;
    fill: #333;
}

.dot svg {
    width: 10px;
    height: 10px;
    fill: #222;
}

.tree-row {
    display: flex;
    align-items: center;
    gap: 8px;
    height: 20px;
    margin: 5px 0 0 18px;
}

.expander svg {
    width: 10px;
    height: 14px;
}

.tree-item {
    display: flex;
    align-items: center;
    width: 132px;
    height: 20px;
    padding-left: 3px;
    background: var(--panel);
}

.eye svg {
    width: 16px;
    height: 12px;
}

.tree-name {
    display: flex;
    align-items: center;
    gap: 14px;
    width: 82px;
    height: 16px;
    margin: 0 4px 0 6px;
    padding-left: 3px;
    background: #999;
    color: white;
    font-size: 11px;
}

.tree-name svg {
    width: 16px;
    height: 16px;
}

.tree-item input {
    width: 13px;
    height: 13px;
    appearance: none;
    border: 1px solid #222;
    border-radius: 50%;
    background: radial-gradient(circle, #222 2px, white 3px);
}

.canvas-foot {
    position: relative;
    display: grid;
    grid-template-columns: 1fr auto 1fr;
    align-items: start;
    padding: 0 4px 4px;
}

.comments {
    border-top: 0;
}

.comments h2 {
    margin-left: 20px;
}

.navbar {
    display: flex;
    gap: 7px;
    height: 23px;
    background: #f3f3f3;
}

.navbar svg {
    width: 18px;
    height: 18px;
}

.navbar .caret {
    margin-left: 3px;
}

.assistant {
    justify-self: end;
    margin: 4px 8px 0 0;
}

.assistant svg {
    width: 17px;
    height: 17px;
}

/* Timeline */
.timeline {
    display: flex;
    align-items: flex-start;
    height: 50px;
    padding-left: 3px;
    border-top: 1px solid #d0d0d0;
    background: var(--panel);
    fill: var(--icon);
}

.playback {
    display: flex;
    height: 48px;
    margin-right: 14px;
}

.playback button {
    width: 25px;
}

.playback svg {
    height: 12px;
}

.playback button:nth-child(3) svg {
    height: 14px;
}

.features {
    display: flex;
    margin-top: 15px;
    list-style: none;
}

.features li {
    width: 24px;
    height: 27px;
    background:
        linear-gradient(#c8c8c8, #c8c8c8) center bottom / 2px 7px no-repeat,
        linear-gradient(#c8c8c8, #c8c8c8) center bottom / 24px 2px no-repeat;
}

.features li:first-child {
    background-position: center bottom, 11px bottom;
}

.features li:last-child {
    background-position: center bottom, -11px bottom;
}

.features button {
    margin: 0 auto;
}

.features svg {
    width: 16px;
    height: 16px;
}

.marker {
    width: 12px;
    height: 32px;
    margin: 9px 0 0 -6px;
}

.settings {
    height: 48px;
    margin: 0 14px 0 auto;
}

.settings svg {
    width: 16px;
    height: 16px;
    fill: #777;
}
```
